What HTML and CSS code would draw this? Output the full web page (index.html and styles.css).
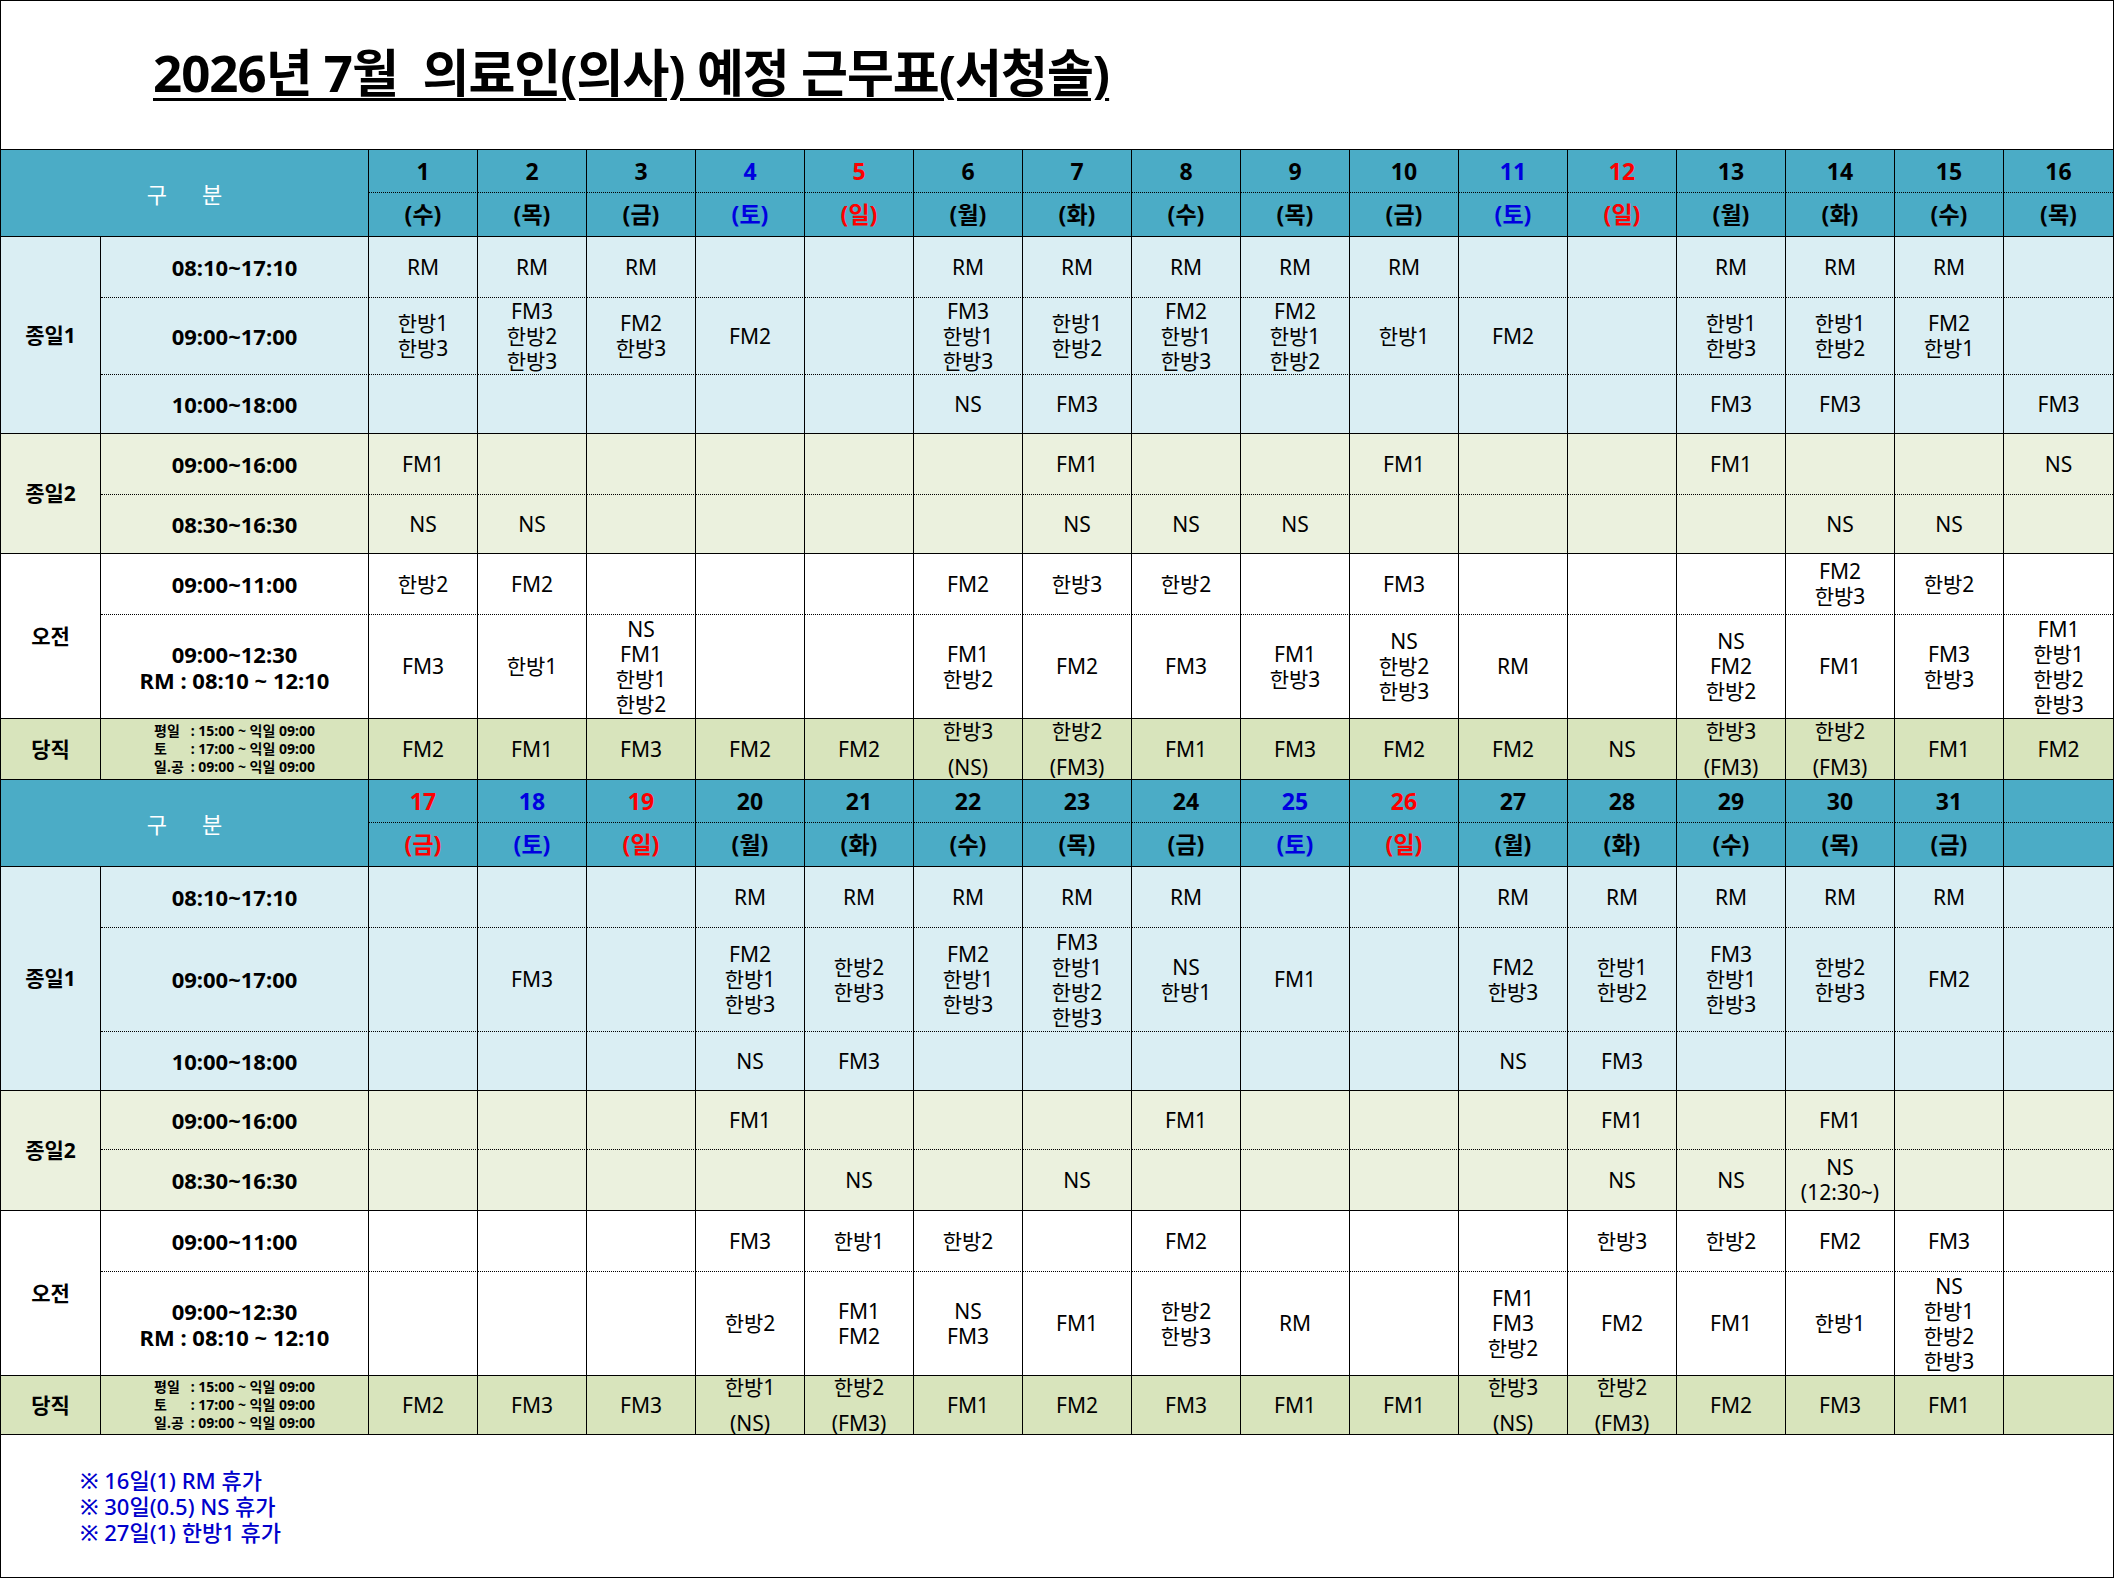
FILE: index.html
```html
<!DOCTYPE html>
<html lang="ko">
<head>
<meta charset="utf-8">
<title>2026년 7월 의료인(의사) 예정 근무표(서청솔)</title>
<link rel="stylesheet" href="styles.css">
</head>
<body>
<div class="page">
  <div class="title-area">
    <h1 class="title">2026년 7월&nbsp; 의료인(의사) 예정 근무표(서청솔)</h1>
  </div>
  <table class="roster">
    <colgroup>
      <col class="c-lab"><col class="c-tm">
      <col><col><col><col><col><col><col><col><col><col><col><col><col><col><col><col>
    </colgroup>
    <tbody>
      <!-- ===== 1 ~ 16 ===== -->
      <tr class="hd hd-num">
        <td class="lab gubun" colspan="2" rowspan="2">구<span class="gap"></span>분</td>
        <td>1</td><td>2</td><td>3</td><td class="sat">4</td><td class="sun">5</td><td>6</td><td>7</td><td>8</td><td>9</td><td>10</td><td class="sat">11</td><td class="sun">12</td><td>13</td><td>14</td><td>15</td><td>16</td>
      </tr>
      <tr class="hd hd-day">
        <td>(수)</td><td>(목)</td><td>(금)</td><td class="sat">(토)</td><td class="sun">(일)</td><td>(월)</td><td>(화)</td><td>(수)</td><td>(목)</td><td>(금)</td><td class="sat">(토)</td><td class="sun">(일)</td><td>(월)</td><td>(화)</td><td>(수)</td><td>(목)</td>
      </tr>

      <tr class="g1 sep row-61">
        <td class="lab" rowspan="3">종일1</td>
        <td class="tm">08:10~17:10</td>
        <td>RM</td><td>RM</td><td>RM</td><td></td><td></td><td>RM</td><td>RM</td><td>RM</td><td>RM</td><td>RM</td><td></td><td></td><td>RM</td><td>RM</td><td>RM</td><td></td>
      </tr>
      <tr class="g1 sep row-77">
        <td class="tm">09:00~17:00</td>
        <td>한방1<br>한방3</td><td>FM3<br>한방2<br>한방3</td><td>FM2<br>한방3</td><td>FM2</td><td></td><td>FM3<br>한방1<br>한방3</td><td>한방1<br>한방2</td><td>FM2<br>한방1<br>한방3</td><td>FM2<br>한방1<br>한방2</td><td>한방1</td><td>FM2</td><td></td><td>한방1<br>한방3</td><td>한방1<br>한방2</td><td>FM2<br>한방1</td><td></td>
      </tr>
      <tr class="g1 row-59">
        <td class="tm">10:00~18:00</td>
        <td></td><td></td><td></td><td></td><td></td><td>NS</td><td>FM3</td><td></td><td></td><td></td><td></td><td></td><td>FM3</td><td>FM3</td><td></td><td>FM3</td>
      </tr>

      <tr class="g2 sep row-61">
        <td class="lab" rowspan="2">종일2</td>
        <td class="tm">09:00~16:00</td>
        <td>FM1</td><td></td><td></td><td></td><td></td><td></td><td>FM1</td><td></td><td></td><td>FM1</td><td></td><td></td><td>FM1</td><td></td><td></td><td>NS</td>
      </tr>
      <tr class="g2 row-59">
        <td class="tm">08:30~16:30</td>
        <td>NS</td><td>NS</td><td></td><td></td><td></td><td></td><td>NS</td><td>NS</td><td>NS</td><td></td><td></td><td></td><td></td><td>NS</td><td>NS</td><td></td>
      </tr>

      <tr class="g3 sep row-61">
        <td class="lab" rowspan="2">오전</td>
        <td class="tm">09:00~11:00</td>
        <td>한방2</td><td>FM2</td><td></td><td></td><td></td><td>FM2</td><td>한방3</td><td>한방2</td><td></td><td>FM3</td><td></td><td></td><td></td><td>FM2<br>한방3</td><td>한방2</td><td></td>
      </tr>
      <tr class="g3 row-104">
        <td class="tm tm-two"><div>09:00~12:30</div><div>RM : 08:10 ~ 12:10</div></td>
        <td>FM3</td><td>한방1</td><td>NS<br>FM1<br>한방1<br>한방2</td><td></td><td></td><td>FM1<br>한방2</td><td>FM2</td><td>FM3</td><td>FM1<br>한방3</td><td>NS<br>한방2<br>한방3</td><td>RM</td><td></td><td>NS<br>FM2<br>한방2</td><td>FM1</td><td>FM3<br>한방3</td><td>FM1<br>한방1<br>한방2<br>한방3</td>
      </tr>

      <tr class="g4 row-61">
        <td class="lab">당직</td>
        <td class="tm duty-tm">
          <div class="duty-lines">
            <div><span class="dk">평일</span> : 15:00 ~ 익일 09:00</div>
            <div><span class="dk">토</span> : 17:00 ~ 익일 09:00</div>
            <div><span class="dk">일.공</span> : 09:00 ~ 익일 09:00</div>
          </div>
        </td>
        <td>FM2</td><td>FM1</td><td>FM3</td><td>FM2</td><td>FM2</td>
        <td><div class="two"><span>한방3</span><span>(NS)</span></div></td>
        <td><div class="two"><span>한방2</span><span>(FM3)</span></div></td>
        <td>FM1</td><td>FM3</td><td>FM2</td><td>FM2</td><td>NS</td>
        <td><div class="two"><span>한방3</span><span>(FM3)</span></div></td>
        <td><div class="two"><span>한방2</span><span>(FM3)</span></div></td>
        <td>FM1</td><td>FM2</td>
      </tr>

      <!-- ===== 17 ~ 31 ===== -->
      <tr class="hd hd-num">
        <td class="lab gubun" colspan="2" rowspan="2">구<span class="gap"></span>분</td>
        <td class="sun">17</td><td class="sat">18</td><td class="sun">19</td><td>20</td><td>21</td><td>22</td><td>23</td><td>24</td><td class="sat">25</td><td class="sun">26</td><td>27</td><td>28</td><td>29</td><td>30</td><td>31</td><td></td>
      </tr>
      <tr class="hd hd-day">
        <td class="sun">(금)</td><td class="sat">(토)</td><td class="sun">(일)</td><td>(월)</td><td>(화)</td><td>(수)</td><td>(목)</td><td>(금)</td><td class="sat">(토)</td><td class="sun">(일)</td><td>(월)</td><td>(화)</td><td>(수)</td><td>(목)</td><td>(금)</td><td></td>
      </tr>

      <tr class="g1 sep row-61">
        <td class="lab" rowspan="3">종일1</td>
        <td class="tm">08:10~17:10</td>
        <td></td><td></td><td></td><td>RM</td><td>RM</td><td>RM</td><td>RM</td><td>RM</td><td></td><td></td><td>RM</td><td>RM</td><td>RM</td><td>RM</td><td>RM</td><td></td>
      </tr>
      <tr class="g1 sep row-104">
        <td class="tm">09:00~17:00</td>
        <td></td><td>FM3</td><td></td><td>FM2<br>한방1<br>한방3</td><td>한방2<br>한방3</td><td>FM2<br>한방1<br>한방3</td><td>FM3<br>한방1<br>한방2<br>한방3</td><td>NS<br>한방1</td><td>FM1</td><td></td><td>FM2<br>한방3</td><td>한방1<br>한방2</td><td>FM3<br>한방1<br>한방3</td><td>한방2<br>한방3</td><td>FM2</td><td></td>
      </tr>
      <tr class="g1 row-59">
        <td class="tm">10:00~18:00</td>
        <td></td><td></td><td></td><td>NS</td><td>FM3</td><td></td><td></td><td></td><td></td><td></td><td>NS</td><td>FM3</td><td></td><td></td><td></td><td></td>
      </tr>

      <tr class="g2 sep row-59">
        <td class="lab" rowspan="2">종일2</td>
        <td class="tm">09:00~16:00</td>
        <td></td><td></td><td></td><td>FM1</td><td></td><td></td><td></td><td>FM1</td><td></td><td></td><td></td><td>FM1</td><td></td><td>FM1</td><td></td><td></td>
      </tr>
      <tr class="g2 row-61">
        <td class="tm">08:30~16:30</td>
        <td></td><td></td><td></td><td></td><td>NS</td><td></td><td>NS</td><td></td><td></td><td></td><td></td><td>NS</td><td>NS</td><td>NS<br>(12:30~)</td><td></td><td></td>
      </tr>

      <tr class="g3 sep row-61">
        <td class="lab" rowspan="2">오전</td>
        <td class="tm">09:00~11:00</td>
        <td></td><td></td><td></td><td>FM3</td><td>한방1</td><td>한방2</td><td></td><td>FM2</td><td></td><td></td><td></td><td>한방3</td><td>한방2</td><td>FM2</td><td>FM3</td><td></td>
      </tr>
      <tr class="g3 row-104">
        <td class="tm tm-two"><div>09:00~12:30</div><div>RM : 08:10 ~ 12:10</div></td>
        <td></td><td></td><td></td><td>한방2</td><td>FM1<br>FM2</td><td>NS<br>FM3</td><td>FM1</td><td>한방2<br>한방3</td><td>RM</td><td></td><td>FM1<br>FM3<br>한방2</td><td>FM2</td><td>FM1</td><td>한방1</td><td>NS<br>한방1<br>한방2<br>한방3</td><td></td>
      </tr>

      <tr class="g4 row-59">
        <td class="lab">당직</td>
        <td class="tm duty-tm">
          <div class="duty-lines">
            <div><span class="dk">평일</span> : 15:00 ~ 익일 09:00</div>
            <div><span class="dk">토</span> : 17:00 ~ 익일 09:00</div>
            <div><span class="dk">일.공</span> : 09:00 ~ 익일 09:00</div>
          </div>
        </td>
        <td>FM2</td><td>FM3</td><td>FM3</td>
        <td><div class="two"><span>한방1</span><span>(NS)</span></div></td>
        <td><div class="two"><span>한방2</span><span>(FM3)</span></div></td>
        <td>FM1</td><td>FM2</td><td>FM3</td><td>FM1</td><td>FM1</td>
        <td><div class="two"><span>한방3</span><span>(NS)</span></div></td>
        <td><div class="two"><span>한방2</span><span>(FM3)</span></div></td>
        <td>FM2</td><td>FM3</td><td>FM1</td><td></td>
      </tr>
    </tbody>
  </table>

  <div class="notes">
    <div>※ 16일(1) RM 휴가</div>
    <div>※ 30일(0.5) NS 휴가</div>
    <div>※ 27일(1) 한방1 휴가</div>
  </div>
</div>
</body>
</html>
```

FILE: styles.css
```css
html, body {
  margin: 0;
  padding: 0;
  background: #ffffff;
}

.page {
  width: 2114px;
  height: 1578px;
  box-sizing: border-box;
  border: 1px solid #000;
  font-family: "Noto Sans", "Noto Sans CJK KR", sans-serif;
  color: #000;
  overflow: hidden;
}

/* ---------- title ---------- */
.title-area {
  height: 148px;
  border-bottom: 1px solid #000;
  box-sizing: content-box;
  padding-left: 152px;
}

.title {
  margin: 0;
  padding-top: 41px;
  font-size: 51px;
  line-height: 60px;
  font-weight: 700;
  letter-spacing: -1px;
  white-space: nowrap;
  text-decoration: underline;
  text-decoration-thickness: 3px;
  text-underline-offset: 6px;
}

/* ---------- roster table ---------- */
.roster {
  width: 2112px;
  border-collapse: separate;
  border-spacing: 0;
  table-layout: fixed;
}

.c-lab { width: 100px; }
.c-tm { width: 268px; }

.roster td {
  padding: 0;
  border-right: 1px solid #000;
  border-bottom: 1px solid #000;
  text-align: center;
  vertical-align: middle;
  font-size: 21px;
  line-height: 25px;
  white-space: nowrap;
  overflow: visible;
}

.roster td:last-child {
  border-right: none;
}

/* row heights */
.hd-num { height: 43px; }
.hd-day { height: 44px; }
.row-59 { height: 59px; }
.row-61 { height: 61px; }
.row-77 { height: 77px; }
.row-104 { height: 104px; }

/* dotted separators between sub rows of one group */
.roster tr.sep td:not(.lab) {
  border-bottom-style: dotted;
}
.roster tr.hd-num td:not(.lab) {
  border-bottom-style: dotted;
}

/* header */
.roster .hd td {
  background: #4bacc6;
  font-size: 23px;
  font-weight: 700;
}
.roster .hd td.gubun {
  color: #ffffff;
  font-weight: 400;
  font-size: 22px;
  padding-top: 2px;
}
.gap {
  display: inline-block;
  width: 35px;
}
.roster td.sat { color: #0000e0; }
.roster td.sun { color: #ff0000; }

/* group backgrounds */
.g1 td { background: #daeef3; }
.g2 td { background: #ebf1de; }
.g3 td { background: #ffffff; }
.g4 td { background: #d8e4bc; }

/* label + time columns */
.roster td.lab {
  font-weight: 700;
  font-size: 21px;
}
.roster td.tm {
  font-weight: 700;
  font-size: 22px;
}
.roster td.tm-two {
  line-height: 26px;
}

.duty-lines {
  display: inline-block;
  text-align: left;
  font-size: 14px;
  line-height: 18px;
  font-weight: 700;
}
.dk {
  display: inline-block;
  width: 33px;
}

/* duty cells with two names spread over the cell */
.two {
  display: flex;
  flex-direction: column;
  justify-content: space-between;
  align-items: center;
  height: 58px;
  line-height: 22px;
}

/* ---------- notes ---------- */
.notes {
  padding: 32px 0 0 79px;
  color: #0000cc;
  font-size: 22px;
  line-height: 26px;
  font-weight: 500;
}
```
